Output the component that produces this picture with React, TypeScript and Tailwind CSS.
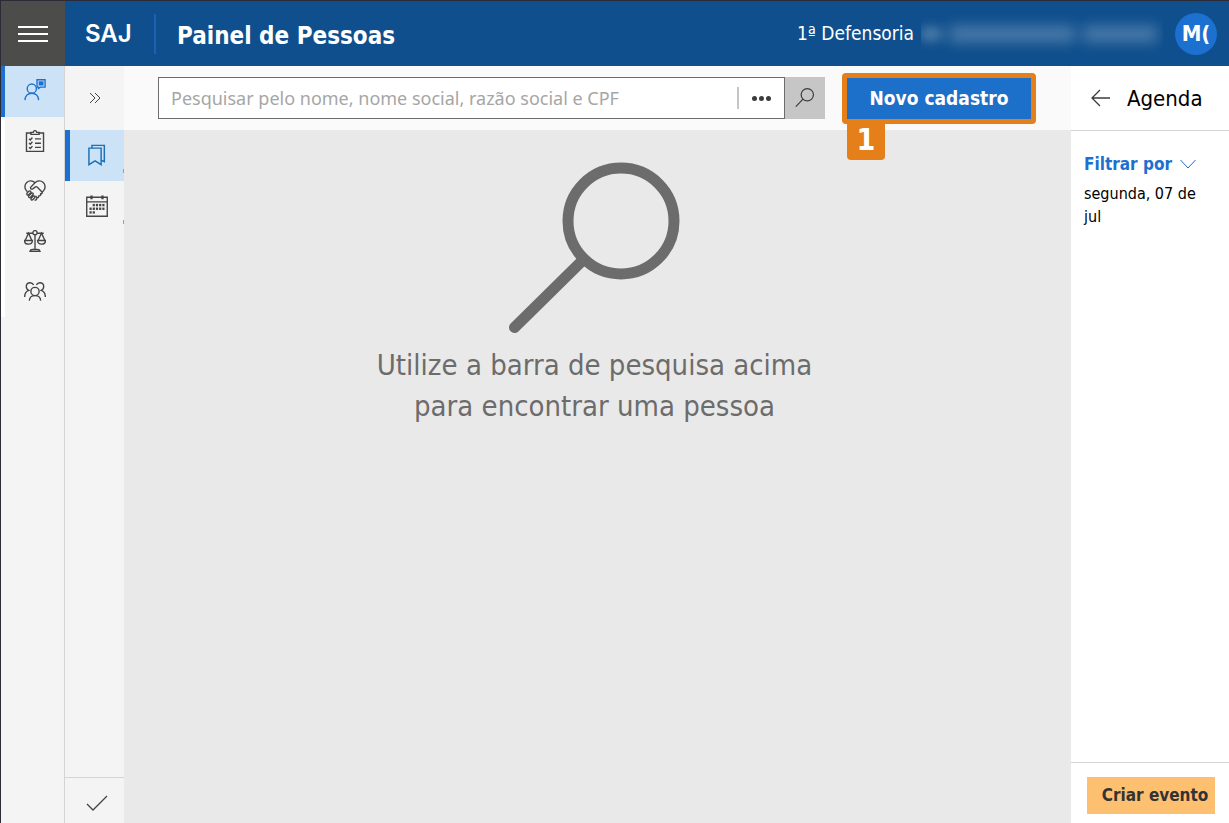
import type { ReactNode } from "react"
import clsx from "clsx"

const strokeProps = {
  fill: "none",
  stroke: "currentColor",
  strokeWidth: 1.5,
  viewBox: "0 0 24 24",
  className: "size-[22px]",
  "aria-hidden": true,
} as const

function PersonChatIcon() {
  return (
    <svg {...strokeProps}>
      <circle cx="8.5" cy="10.5" r="5" />
      <path d="M1 23c.3-4.500 3.300-7.500 7.500-7.500s7.200 3 7.500 7.500" />
      <path d="M14.200 0.800h8.800v8h-5l-2.200 1.500v-1.500h-1.600z" />
      <path d="M16 2.500h5.300v4.600H16z" fill="currentColor" stroke="none" />
    </svg>
  )
}

function ClipboardIcon() {
  return (
    <svg {...strokeProps}>
      <path d="M8 3.300H2.700v20h18.600v-20H16" />
      <path d="M7.500 4.800V2.600h2.600c.2-1.200.9-1.900 1.900-1.900s1.700.7 1.900 1.900h2.600v2.200z" />
      <path d="M5.500 9.500l1.400 1.300 2.300-2.600M5.500 14.200l1.400 1.300 2.300-2.600M5.500 18.900l1.400 1.300 2.300-2.600M12 9.700h6.500M12 14.400h6.500M12 19h6.500" />
    </svg>
  )
}

function HandshakeIcon() {
  return (
    <svg {...strokeProps}>
      <path d="M12 3C9.500.5 5.500.3 3 2.600.5 5 .3 9 2.600 11.600l1.200 1.300M12 3c2.500-2.500 6.500-2.700 9-.4 2.500 2.400 2.700 6.400.4 9l-1.800 2" />
      <path d="M12 3L7.200 8c-.7 1.300.9 2.500 2.400 1.700L12.500 7.500c.8-.4 1.400-.3 2.100.3l5 5.200c.9 1.300-.6 2.700-1.900 1.700" />
      <path d="M17.700 14.700c1.400 1.400-.3 3.400-1.900 2.200M15.800 16.900c.9 1.400-.4 2.900-1.800 2l-1.500-1.500M14 18.900c.4 1.800-1 3.300-2.400 3.300" />
      <path d="M3.300 14.300l2.200-2.200c1.300-.8 2.700.5 1.800 1.800l-2.200 2.200c-1.300.9-2.700-.5-1.800-1.800zM5.200 17.300l2.900-2.900c1.300-.8 2.500.5 1.700 1.800l-2.700 2.700c-1.300.9-2.800-.4-1.900-1.600zM7.800 19.900l2.300-2.300c1.300-.8 2.500.5 1.600 1.800l-2.100 2.100c-1.300.8-2.600-.4-1.800-1.600z" />
    </svg>
  )
}

function ScalesIcon() {
  return (
    <svg {...strokeProps}>
      <circle cx="12" cy="3" r="2.300" />
      <path d="M2.500 3.500H9.700M14.300 3.500h7.200M12 5.300v16M6.500 23.200c.3-1.500 1.500-2 3-2h5c1.500 0 2.700.5 3 2z" />
      <path d="M4.900 3.500L1.200 11.500h7.400zM.6 11.500h8.600c0 2.400-1.800 3.900-4.300 3.900S.6 13.900.6 11.500zM19.100 3.500l-3.700 8h7.400zM14.800 11.500h8.600c0 2.400-1.800 3.900-4.300 3.900s-4.300-1.500-4.300-3.900z" />
    </svg>
  )
}

function PeopleIcon() {
  return (
    <svg {...strokeProps}>
      <circle cx="12" cy="12.500" r="4.500" />
      <path d="M5.800 22.500c.2-3.600 2.800-5.500 6.200-5.500s6 1.900 6.200 5.500" />
      <path d="M10.500 5.500C9.700 3.900 8.300 3 6.700 3 4.300 3 2.500 4.800 2.500 7.200c0 2 1.100 3.500 2.700 4.200C2.400 12.300.8 14.700.7 18.500M13.500 5.500c.8-1.600 2.200-2.500 3.800-2.500 2.400 0 4.200 1.800 4.200 4.200 0 2-1.100 3.500-2.700 4.200 2.800.9 4.400 3.300 4.500 7.100" />
    </svg>
  )
}

function BookmarksIcon() {
  return (
    <svg {...strokeProps} strokeWidth={1.6}>
      <path d="M3.200 4.500h13.300V22.500l-6.600-4-6.700 4z" />
      <path d="M6.500 4.500v-3h13.500v17.700l-3.500-1.500" />
    </svg>
  )
}

function CalendarIcon() {
  const dots = [
    [8.5, 11], [12, 11], [15.5, 11], [19, 11],
    [5, 15], [8.5, 15], [12, 15], [15.5, 15], [19, 15],
    [5, 19], [8.5, 19],
  ]
  return (
    <svg {...strokeProps}>
      <path d="M.8 2.500h22.400v20.700H.8zM.8 7.500h22.400" />
      <path d="M6 .5v4M18 .5v4" strokeWidth="2.500" />
      {dots.map(([cx, cy]) => (
        <path key={`${cx}-${cy}`} d={`M${cx - 1.2} ${cy}h2.400`} strokeWidth="2.600" />
      ))}
    </svg>
  )
}

function SearchIcon() {
  return (
    <svg {...strokeProps} strokeWidth={1.3}>
      <circle cx="14.500" cy="8.500" r="6.700" />
      <path d="M9.800 13.300L2 21.500" />
    </svg>
  )
}

const modules: { name: string; icon: ReactNode }[] = [
  { name: "Pessoas", icon: <PersonChatIcon /> },
  { name: "Tarefas", icon: <ClipboardIcon /> },
  { name: "Atendimentos", icon: <HandshakeIcon /> },
  { name: "Processos", icon: <ScalesIcon /> },
  { name: "Equipe", icon: <PeopleIcon /> },
]

const panels: { name: string; icon: ReactNode }[] = [
  { name: "Marcadores", icon: <BookmarksIcon /> },
  { name: "Calendário", icon: <CalendarIcon /> },
]

function Header() {
  return (
    <header className="flex h-[65px] items-center bg-[#0f4f8d] text-white">
      <button type="button" aria-label="Menu" className="flex h-full w-16 shrink-0 flex-col items-center justify-center gap-[5px] bg-[#4c4d4b]">
        <span className="h-[2px] w-[30px] bg-white" />
        <span className="h-[2px] w-[30px] bg-white" />
        <span className="h-[2px] w-[30px] bg-white" />
      </button>
      <span className="w-[89px] pl-5 font-['Inter',sans-serif] text-2xl font-semibold">SAJ</span>
      <span className="h-10 w-[2px] bg-[#1b62b5]" />
      <h1 className="ml-[21px] pt-1 text-2xl font-bold">Painel de Pessoas</h1>
      <div className="ml-auto flex items-center pr-[12px]">
        <span className="text-[19px]">1ª Defensoria</span>
        {/* unit name stays hidden */}
        <div className="ml-[7px] flex h-10 w-[242px] items-center gap-2 overflow-hidden" aria-hidden="true">
          <span className="h-3 w-5 bg-white/30 blur-[6px]" />
          <span className="h-4 w-[126px] bg-white/25 blur-[7px]" />
          <span className="h-4 w-[74px] bg-white/25 blur-[7px]" />
        </div>
        <button type="button" className="ml-3 size-[42px] rounded-full bg-[#1c70d0] text-[22px] font-bold">
          M(
        </button>
      </div>
    </header>
  )
}

function ModuleRail() {
  return (
    <nav className="w-16 shrink-0 border-r border-[#d4d4d4] bg-[#f4f4f4] text-[#444]">
      {modules.map((item, i) => (
        <a
          key={item.name}
          href="#"
          aria-label={item.name}
          className={clsx(
            "flex items-center justify-center border-l-4 pb-[3px]",
            i === 0 ? "h-[51px] border-[#1c70d0] bg-[#cce3f7] text-[#1c70d0]" : "h-[50px] border-white",
          )}
        >
          {item.icon}
        </a>
      ))}
    </nav>
  )
}

function PanelRail() {
  return (
    <nav className="flex w-[59px] shrink-0 flex-col bg-[#f4f4f4] text-[#444]">
      <button type="button" aria-label="Expandir" className="flex h-16 items-center justify-center">
        <svg className="h-3 w-3" viewBox="0 0 12 12" fill="none" stroke="currentColor" aria-hidden="true">
          <path d="M1 1l5 5-5 5M6 1l5 5-5 5" />
        </svg>
      </button>
      {panels.map((item, i) => (
        <a
          key={item.name}
          href="#"
          aria-label={item.name}
          className={clsx(
            "relative flex h-[51px] items-center justify-center border-l-5 pb-[2px]",
            i === 0 ? "border-[#1c70d0] bg-[#cce3f7] text-[#1c70b8]" : "border-transparent",
          )}
        >
          {item.icon}
          {/* edge of the collapsed label */}
          <span className="absolute right-0 bottom-2 h-1 w-px bg-current opacity-50" />
        </a>
      ))}
      <button type="button" aria-label="Confirmar" className="mt-auto flex h-[46px] items-center justify-center border-t border-[#d4d4d4] pt-1 pl-1">
        <svg className="h-4 w-[22px]" viewBox="0 0 22 16" fill="none" stroke="currentColor" strokeWidth="1.300" aria-hidden="true">
          <path d="M1 9l6 6L21 1" />
        </svg>
      </button>
    </nav>
  )
}

function Toolbar() {
  return (
    <div className="flex h-16 items-center bg-[#fafafa] pr-[35px] pl-[34px]">
      <form className="flex h-[42px] grow" onSubmit={(e) => e.preventDefault()}>
        <div className="flex grow items-center border border-[#6c6c6c] bg-white">
          <input
            type="text"
            aria-label="Pesquisar"
            placeholder="Pesquisar pelo nome, nome social, razão social e CPF"
            className="h-full min-w-0 grow px-3 font-['Noto_Sans',sans-serif] text-lg outline-none placeholder:text-[#a6a6a6]"
          />
          <button type="button" aria-label="Mais opções" className="flex h-[22px] w-[47px] items-center justify-center gap-[2px] border-l-2 border-[#c6c6c6]">
            <span className="size-[5px] rounded-full bg-[#3c3c3c]" />
            <span className="size-[5px] rounded-full bg-[#3c3c3c]" />
            <span className="size-[5px] rounded-full bg-[#3c3c3c]" />
          </button>
        </div>
        <button type="submit" aria-label="Buscar" className="flex w-10 items-center justify-center bg-[#c6c6c6] text-[#3c3c3c]">
          <SearchIcon />
        </button>
      </form>
      <div className="relative ml-[17px] rounded-sm border-5 border-[#e47f1a]">
        <button type="button" className="h-[41px] w-46 bg-[#1c70c9] text-[19px] font-bold text-white">
          Novo cadastro
        </button>
        <span className="absolute top-full left-0 flex h-[41px] w-[38px] items-center justify-center rounded-sm bg-[#e47f1a] pt-[2px] text-3xl font-bold text-white">
          1
        </span>
      </div>
    </div>
  )
}

function EmptyState() {
  return (
    <div className="flex grow flex-col items-center pt-8 pr-[6px] text-[#6c6c6c]">
      <svg className="h-[171px] w-[171px]" viewBox="0 0 171 171" fill="none" stroke="currentColor" aria-hidden="true">
        <circle cx="112" cy="59" r="53" strokeWidth="11" />
        <path d="M73 99L5.500 165.500" strokeWidth="11" strokeLinecap="round" />
      </svg>
      <p className="mt-3 w-[470px] text-center text-[29px] leading-[41px]">
        Utilize a barra de pesquisa acima para encontrar uma pessoa
      </p>
    </div>
  )
}

function Agenda() {
  return (
    <aside className="flex w-[158px] shrink-0 flex-col bg-white text-black">
      <div className="flex h-[65px] items-center gap-4 border-b border-[#d4d4d4] pl-5">
        <button type="button" aria-label="Voltar">
          <svg className="h-[18px] w-5" viewBox="0 0 20 18" fill="none" stroke="#3c3c3c" strokeWidth="1.300" aria-hidden="true">
            <path d="M19 9H1M9 1L1 9l8 8" />
          </svg>
        </button>
        <h2 className="text-[22px]">Agenda</h2>
      </div>
      <div className="px-[13px] pt-[21px] text-base">
        <button type="button" className="flex items-center gap-2 text-[17px] leading-6 font-bold text-[#1c70d0]">
          Filtrar por
          <svg className="h-[10px] w-4" viewBox="0 0 16 10" fill="none" stroke="currentColor" aria-hidden="true">
            <path d="M0.500 1L8 9l7.500-8" />
          </svg>
        </button>
        <p className="mt-[6px] leading-[23px]">segunda, 07 de jul</p>
      </div>
      <div className="mt-auto flex h-[61px] items-center border-t border-[#d4d4d4] pt-1 pl-4">
        <button type="button" className="h-[37px] w-32 bg-[#fdc070] pt-[2px] pl-2 text-[17px] font-bold text-[#333]">
          Criar evento
        </button>
      </div>
    </aside>
  )
}

export default function App() {
  return (
    <div className="flex min-h-screen flex-col border-t border-l border-[#2b2b38] bg-[#e9e9e9] font-['DejaVu_Sans_Condensed','Noto_Sans',sans-serif]">
      <Header />
      <div className="flex grow">
        <ModuleRail />
        <PanelRail />
        <main className="flex min-w-0 grow flex-col">
          <Toolbar />
          <EmptyState />
        </main>
        <Agenda />
      </div>
    </div>
  )
}
